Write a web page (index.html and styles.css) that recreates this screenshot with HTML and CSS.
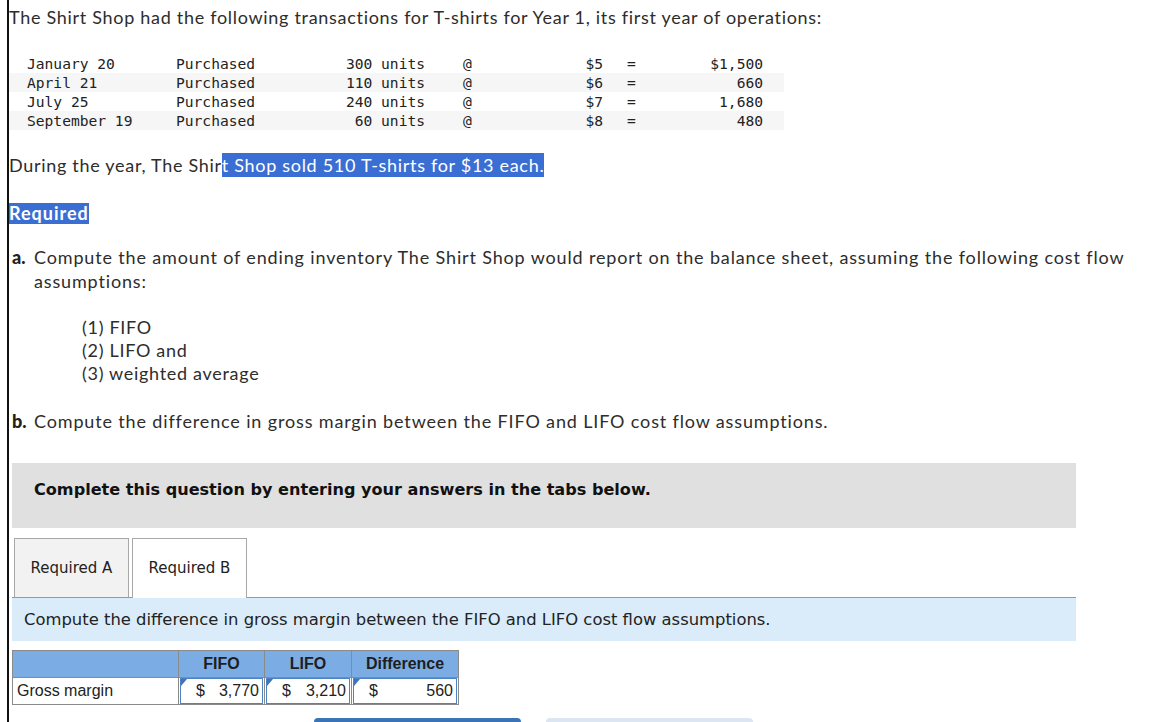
FILE: index.html
```html
<!DOCTYPE html>
<html>
<head>
<meta charset="utf-8">
<link rel="stylesheet" href="styles.css">
</head>
<body>
<div class="page">
  <p class="intro">The Shirt Shop had the following transactions for T-shirts for Year 1, its first year of operations:</p>

  <div class="ledger">
    <div class="lrow"><span></span><span>January 20</span><span>Purchased</span><span class="r">300 units</span><span></span><span>@</span><span class="r">$5</span><span></span><span>=</span><span class="r">$1,500</span><span></span></div>
    <div class="lrow alt"><span></span><span>April 21</span><span>Purchased</span><span class="r">110 units</span><span></span><span>@</span><span class="r">$6</span><span></span><span>=</span><span class="r">660</span><span></span></div>
    <div class="lrow"><span></span><span>July 25</span><span>Purchased</span><span class="r">240 units</span><span></span><span>@</span><span class="r">$7</span><span></span><span>=</span><span class="r">1,680</span><span></span></div>
    <div class="lrow alt"><span></span><span>September 19</span><span>Purchased</span><span class="r">60 units</span><span></span><span>@</span><span class="r">$8</span><span></span><span>=</span><span class="r">480</span><span></span></div>
  </div>

  <p class="sold">During the year, The Shir<span class="sel">t Shop sold 510 T-shirts for $13 each. </span></p>

  <p class="req"><span class="sel-b">Required</span></p>

  <div class="item">
    <b class="lbl">a.</b>
    <div class="itext">Compute the amount of ending inventory The Shirt Shop would report on the balance sheet, assuming the following cost flow assumptions:</div>
  </div>

  <div class="methods">
    <div>(1) FIFO</div>
    <div>(2) LIFO and</div>
    <div>(3) weighted average</div>
  </div>

  <div class="item item-b">
    <b class="lbl">b.</b>
    <div class="itext">Compute the difference in gross margin between the FIFO and LIFO cost flow assumptions.</div>
  </div>

  <div class="work">
    <div class="notice">Complete this question by entering your answers in the tabs below.</div>

    <div class="tabs">
      <div class="tab">Required A</div>
      <div class="tab active">Required B</div>
    </div>

    <div class="instr">Compute the difference in gross margin between the FIFO and LIFO cost flow assumptions.</div>

    <table class="ans">
      <tr class="head">
        <th class="c0"></th>
        <th class="c1">FIFO</th>
        <th class="c2">LIFO</th>
        <th class="c3">Difference</th>
      </tr>
      <tr>
        <td class="label">Gross margin</td>
        <td class="in"><div class="box"><span>$</span><span>3,770</span></div></td>
        <td class="in"><div class="box"><span>$</span><span>3,210</span></div></td>
        <td class="in"><div class="box"><span>$</span><span>560</span></div></td>
      </tr>
    </table>

    <div class="buttons">
      <div class="btn prev"></div>
      <div class="btn next"></div>
    </div>
  </div>
</div>
</body>
</html>
```

FILE: styles.css
```css
html, body {
  margin: 0;
  padding: 0;
  background: #fff;
  overflow: hidden;
}
.page {
  margin-left: 7px;
  border-left: 2px solid #111;
  height: 722px;
  box-sizing: border-box;
  padding-top: 5px;
  font-family: Lato, "Open Sans", sans-serif;
  font-size: 18px;
  letter-spacing: 0.7px;
  color: #2d2d2d;
  width: 1149px;
}
p { margin: 0; }
.intro {
  line-height: 24px;
  margin: 0;
}
.ledger {
  margin-top: 25px;
  width: 775px;
  font-family: "DejaVu Sans Mono", monospace;
  font-size: 14.6px;
  letter-spacing: 0;
  color: #222;
}
.lrow {
  display: grid;
  grid-template-columns: 18px 149px 124px 125px 38px 87px 53px 24px 13px 123px 21px;
  height: 19px;
  line-height: 19px;
  white-space: pre;
}
.lrow.alt { background: #f6f6f6; }
.lrow .r { text-align: right; }
.sold {
  margin-top: 23px;
  line-height: 24px;
}
.sel {
  background: #3a6ed3;
  color: #fff;
  display: inline-block;
  line-height: 24px;
}
.req {
  margin-top: 24px;
  font-weight: bold;
  line-height: 24px;
  letter-spacing: 1px;
}
.sel-b {
  background: #3a6ed3;
  color: #fff;
  display: inline-block;
  line-height: 21px;
}
.item {
  display: flex;
  margin-top: 20px;
  margin-left: 3px;
  line-height: 24px;
  letter-spacing: 0.85px;
}
.lbl {
  width: 22px;
  flex: none;
  font-weight: 900;
  letter-spacing: 0;
  color: #222;
}
.itext { width: 1100px; }
.methods {
  margin-top: 23px;
  margin-left: 73px;
  line-height: 23px;
}
.item-b { margin-top: 24px; }

.work {
  margin-left: 3px;
  width: 1064px;
  margin-top: 30px;
  letter-spacing: 0;
}
.notice {
  background: #e0e0e0;
  height: 65px;
  box-sizing: border-box;
  padding: 17px 22px 0;
  line-height: 20px;
  font-family: "DejaVu Sans", Verdana, sans-serif;
  font-weight: bold;
  font-size: 16.1px;
  color: #111;
}
.tabs {
  display: flex;
  gap: 3px;
  margin-top: 10px;
  padding-left: 2px;
  border-bottom: 1px solid #999;
  height: 59px;
}
.tab {
  width: 115px;
  height: 59px;
  box-sizing: border-box;
  border: 1px solid #a8a8a8;
  border-bottom: none;
  background: #f2f2f2;
  display: flex;
  align-items: center;
  justify-content: center;
  font-family: "DejaVu Sans", Verdana, sans-serif;
  font-size: 15px;
  color: #222;
  padding-bottom: 1px;
}
.tab.active {
  background: #fff;
  height: 60px;
  position: relative;
  z-index: 1;
}
.instr {
  background: #daecf9;
  height: 43px;
  box-sizing: border-box;
  padding: 11px 12px 0;
  line-height: 22px;
  font-family: "DejaVu Sans", Verdana, sans-serif;
  font-size: 16.4px;
  color: #222;
}
.ans {
  margin-top: 9px;
  border-collapse: collapse;
  font-family: "Liberation Sans", Arial, sans-serif;
  font-size: 16px;
  color: #222;
}
.ans th, .ans td {
  border: 1px solid #8a8a8a;
  padding: 0;
}
.ans .head th {
  background: #7badE4;
  height: 26px;
  font-weight: bold;
  text-align: center;
  color: #1e1e1e;
}
.c0 { width: 165px; }
.c1 { width: 85px; }
.c2 { width: 86px; }
.c3 { width: 106px; }
.ans td { height: 26px; }
.ans .label {
  padding-left: 4px;
  text-align: left;
}
.ans .in { padding: 0 1px; }
.box {
  position: relative;
  height: 26px;
  box-sizing: border-box;
  border: 1px solid #4f82c2;
  display: flex;
  justify-content: space-between;
  align-items: center;
  padding: 0 3px 0 15px;
}
.box::before {
  content: "";
  position: absolute;
  left: 0;
  top: 0;
  border-top: 7px solid #3f74bd;
  border-right: 6px solid transparent;
}
.buttons {
  display: flex;
  gap: 25px;
  margin-top: 13px;
  padding-left: 302px;
}
.btn {
  width: 207px;
  height: 30px;
  border-radius: 4px;
}
.prev { background: #3b73b7; }
.next { background: #dce6f3; }
```
